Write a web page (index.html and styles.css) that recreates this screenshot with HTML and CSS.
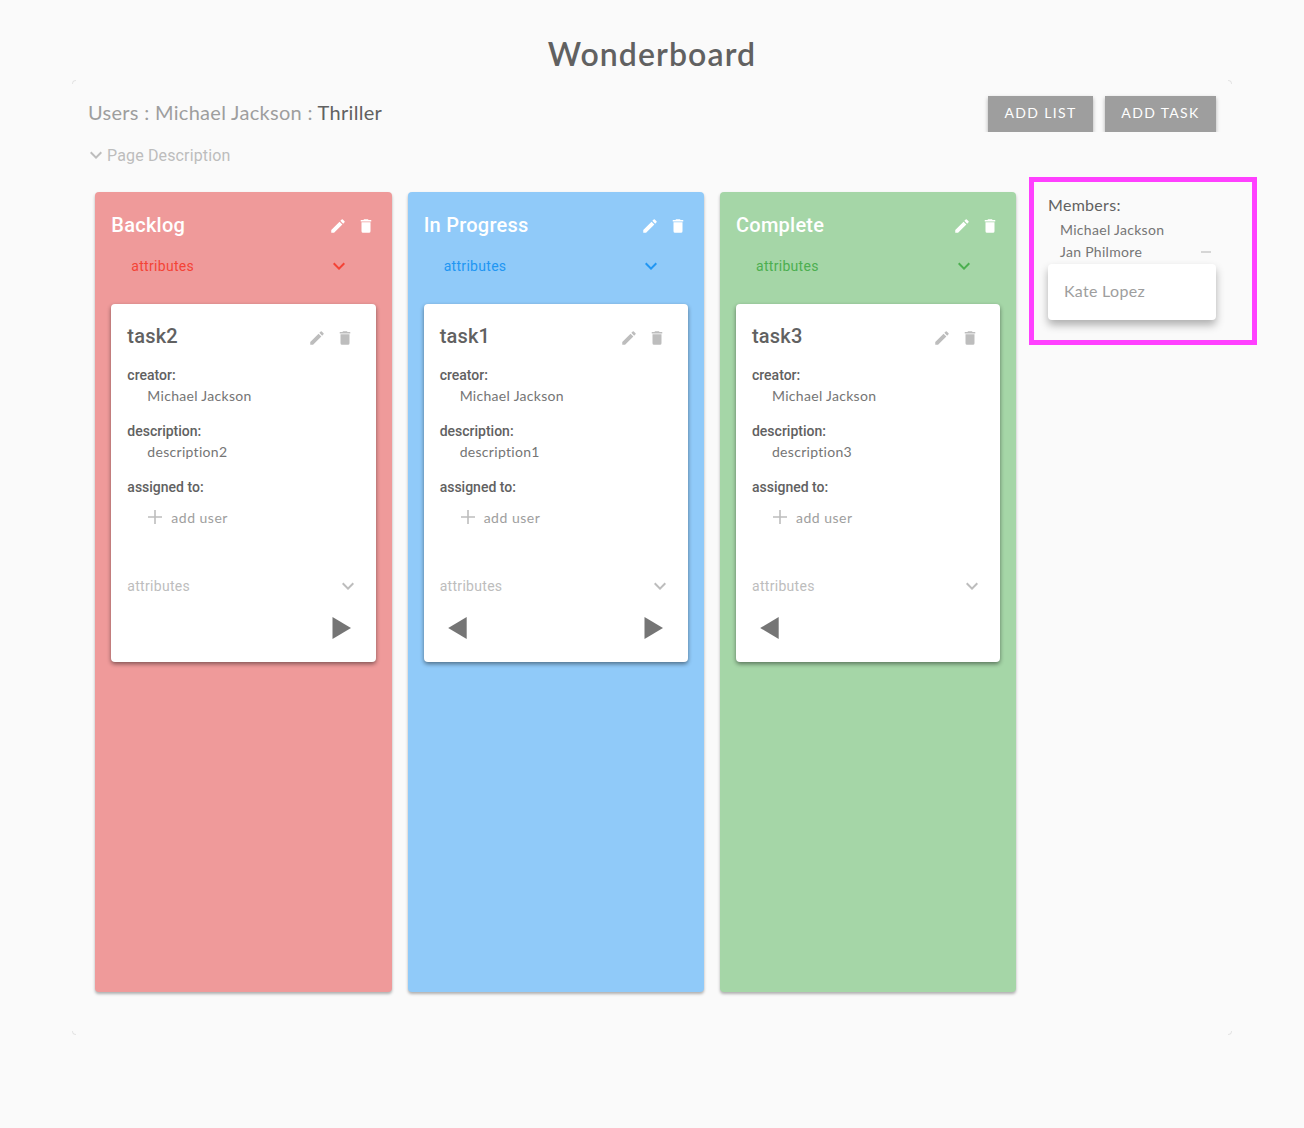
FILE: index.html
```html
<!DOCTYPE html>
<html lang="en">
<head>
<meta charset="utf-8">
<title>Wonderboard</title>
<link rel="stylesheet" href="styles.css">
</head>
<body>
<svg class="defs" width="0" height="0" aria-hidden="true">
  <symbol id="i-edit" viewBox="0 0 24 24"><path d="M3 17.25V21h3.75L17.81 9.94l-3.75-3.75L3 17.25zM20.71 7.04a1 1 0 0 0 0-1.41l-2.34-2.34a1 1 0 0 0-1.41 0l-1.83 1.83 3.75 3.75 1.83-1.83z"/></symbol>
  <symbol id="i-trash" viewBox="0 0 24 24"><path d="M6 19a2 2 0 0 0 2 2h8a2 2 0 0 0 2-2V7H6v12zM19 4h-3.5l-1-1h-5l-1 1H5v2h14V4z"/></symbol>
  <symbol id="i-chev" viewBox="0 0 24 24"><path d="M7.41 8.59 12 13.17l4.59-4.58L18 10l-6 6-6-6z"/></symbol>
  <symbol id="i-plus" viewBox="0 0 24 24"><path d="M19 12.800h-6.200V19h-1.600v-6.200H5v-1.600h6.200V5h1.600v6.200H19z"/></symbol>
  <symbol id="i-next" viewBox="0 0 24 24"><path d="M2.500 1v22L21 12z"/></symbol>
  <symbol id="i-prev" viewBox="0 0 24 24"><path d="M20.700 1v22L2.200 12z"/></symbol>
</svg>

<h1 class="title">Wonderboard</h1>

<main class="panel">
  <span class="mark mark-tl"></span><span class="mark mark-tr"></span><span class="mark mark-bl"></span><span class="mark mark-br"></span>
  <header class="toolbar">
    <div class="crumbs"><span class="crumb-muted">Users : Michael Jackson : </span><span class="crumb-current">Thriller</span></div>
    <div class="actions">
      <button class="btn btn-list">ADD LIST</button>
      <button class="btn btn-task">ADD TASK</button>
    </div>
  </header>
  <div class="page-desc"><svg class="page-chev"><use href="#i-chev"/></svg><span>Page Description</span></div>

  <div class="board">
    <div class="lists">
      <section class="list list-red">
        <div class="list-head"><h2>Backlog</h2><svg class="ic ic-edit"><use href="#i-edit"/></svg><svg class="ic ic-trash"><use href="#i-trash"/></svg></div>
        <div class="list-attrs"><span>attributes</span><svg class="chev"><use href="#i-chev"/></svg></div>
        <article class="task">
          <div class="task-head"><h3>task2</h3><svg class="ic ic-edit"><use href="#i-edit"/></svg><svg class="ic ic-trash"><use href="#i-trash"/></svg></div>
          <div class="label">creator:</div><div class="value">Michael Jackson</div>
          <div class="label label-next">description:</div><div class="value">description2</div>
          <div class="label label-next">assigned to:</div>
          <div class="add-user"><svg class="plus"><use href="#i-plus"/></svg><span>add user</span></div>
          <div class="task-attrs"><span>attributes</span><svg class="chev"><use href="#i-chev"/></svg></div>
          <div class="moves moves-end"><svg class="move"><use href="#i-next"/></svg></div>
        </article>
      </section>

      <section class="list list-blue">
        <div class="list-head"><h2>In Progress</h2><svg class="ic ic-edit"><use href="#i-edit"/></svg><svg class="ic ic-trash"><use href="#i-trash"/></svg></div>
        <div class="list-attrs"><span>attributes</span><svg class="chev"><use href="#i-chev"/></svg></div>
        <article class="task">
          <div class="task-head"><h3>task1</h3><svg class="ic ic-edit"><use href="#i-edit"/></svg><svg class="ic ic-trash"><use href="#i-trash"/></svg></div>
          <div class="label">creator:</div><div class="value">Michael Jackson</div>
          <div class="label label-next">description:</div><div class="value">description1</div>
          <div class="label label-next">assigned to:</div>
          <div class="add-user"><svg class="plus"><use href="#i-plus"/></svg><span>add user</span></div>
          <div class="task-attrs"><span>attributes</span><svg class="chev"><use href="#i-chev"/></svg></div>
          <div class="moves"><svg class="move"><use href="#i-prev"/></svg><svg class="move"><use href="#i-next"/></svg></div>
        </article>
      </section>

      <section class="list list-green">
        <div class="list-head"><h2>Complete</h2><svg class="ic ic-edit"><use href="#i-edit"/></svg><svg class="ic ic-trash"><use href="#i-trash"/></svg></div>
        <div class="list-attrs"><span>attributes</span><svg class="chev"><use href="#i-chev"/></svg></div>
        <article class="task">
          <div class="task-head"><h3>task3</h3><svg class="ic ic-edit"><use href="#i-edit"/></svg><svg class="ic ic-trash"><use href="#i-trash"/></svg></div>
          <div class="label">creator:</div><div class="value">Michael Jackson</div>
          <div class="label label-next">description:</div><div class="value">description3</div>
          <div class="label label-next">assigned to:</div>
          <div class="add-user"><svg class="plus"><use href="#i-plus"/></svg><span>add user</span></div>
          <div class="task-attrs"><span>attributes</span><svg class="chev"><use href="#i-chev"/></svg></div>
          <div class="moves"><svg class="move"><use href="#i-prev"/></svg></div>
        </article>
      </section>
    </div>

    <aside class="members">
      <div class="members-title">Members:</div>
      <div class="member">Michael Jackson</div>
      <div class="member member-row"><span>Jan Philmore</span><i class="minus"></i></div>
      <div class="member-menu">Kate Lopez</div>
    </aside>
  </div>
</main>
</body>
</html>
```

FILE: styles.css
```css
* { box-sizing: border-box; }
html, body { margin: 0; padding: 0; }
body {
  height: 1128px;
  background: #fafafa;
  font-family: "Roboto", sans-serif;
  color: #616161;
  overflow: hidden;
}
.defs { position: absolute; }

.title {
  margin: 0;
  height: 80px;
  padding-top: 33px;
  text-align: center;
  font: 600 32px/41px "Lato", sans-serif;
  letter-spacing: 1.1px;
  color: #616161;
}

.panel {
  position: relative;
  width: 1160px;
  height: 955px;
  margin-left: 72px;
}
.mark { position: absolute; width: 4px; height: 4px; border: 0 solid #e4e4e4; }
.mark-tl { left: 0; top: 0; border-top-width: 1px; border-left-width: 1px; border-top-left-radius: 4px; }
.mark-tr { right: 0; top: 0; border-top-width: 1px; border-right-width: 1px; border-top-right-radius: 4px; }
.mark-bl { left: 0; bottom: 0; border-bottom-width: 1px; border-left-width: 1px; border-bottom-left-radius: 4px; }
.mark-br { right: 0; bottom: 0; border-bottom-width: 1px; border-right-width: 1px; border-bottom-right-radius: 4px; }

.toolbar {
  display: flex;
  justify-content: space-between;
  height: 52px;
  padding: 16px 16px 0;
  overflow: hidden;
}
.crumbs {
  font: 400 20px/32px "Lato", sans-serif;
  letter-spacing: 0.3px;
}
.crumb-muted { color: #9e9e9e; }
.crumb-current { color: #616161; }
.actions { display: flex; gap: 12px; }
.btn {
  height: 36px;
  padding: 0 0 2px;
  border: 0;
  background: #9e9e9e;
  color: #fff;
  font: 400 14px/34px "Lato", sans-serif;
  letter-spacing: 1.35px;
  box-shadow: 0 2px 4px rgba(0,0,0,.3);
}
.btn-list { width: 105px; }
.btn-task { width: 111px; }

.page-desc {
  display: flex;
  align-items: center;
  height: 24px;
  margin-top: 11px;
  padding-left: 12px;
  font-size: 16px;
  letter-spacing: 0.15px;
  color: #bdbdbd;
}
.page-chev { width: 24px; height: 24px; margin-right: -1px; fill: #bdbdbd; }

.board {
  display: flex;
  align-items: flex-start;
  padding-left: 23.33px;
}
.lists {
  flex: none;
  display: flex;
  gap: 16px;
  width: 921px;
  margin-top: 25px;
}
.list {
  flex: 1 1 0;
  height: 800px;
  padding: 16px;
  border-radius: 4px;
  box-shadow: 0 2px 3px rgba(0,0,0,.3);
}
.list-red { background: #ef9a9a; --accent: #f44336; }
.list-blue { background: #90caf9; --accent: #2196f3; }
.list-green { background: #a5d6a7; --accent: #4caf50; }

.list-head {
  display: flex;
  align-items: center;
  height: 34px;
  color: #fff;
  fill: #fff;
}
.list-head h2 {
  flex: 1;
  margin: 0;
  font: 500 20px/32px "Roboto", sans-serif;
  letter-spacing: 0.25px;
}
.ic { width: 18px; height: 18px; flex: none; }
.ic-edit { margin-right: 10px; }
.ic-trash { margin-right: 1px; }
.list-head .ic { margin-top: 2px; }

.list-attrs {
  display: flex;
  align-items: center;
  justify-content: space-between;
  height: 48px;
  padding: 0 24.5px 0 20px;
  font-size: 14px;
  letter-spacing: 0.3px;
  color: var(--accent);
  fill: var(--accent);
}
.chev { width: 24px; height: 24px; flex: none; }

.task {
  height: 358px;
  margin-top: 14px;
  padding: 16px;
  background: #fff;
  border-radius: 4px;
  box-shadow: 0 2px 4px rgba(0,0,0,.45);
}
.task-head {
  display: flex;
  align-items: center;
  height: 32px;
  margin-bottom: 16px;
  fill: #bdbdbd;
}
.task-head h3 {
  flex: 1;
  margin: 0;
  font: 500 20px/32px "Roboto", sans-serif;
  letter-spacing: 0.2px;
  color: #616161;
}
.task-head .ic-trash { margin-right: 5.5px; }
.task-head .ic { margin-top: 4px; }
.task-head .ic-edit { margin-right: 10px; }

.label {
  height: 17px;
  font: 500 14px/15px "Roboto", sans-serif;
  color: #616161;
}
.label-next { margin-top: 20px; }
.value {
  height: 19px;
  padding-left: 20px;
  font: 400 14px/22px "Lato", sans-serif;
  letter-spacing: 0.3px;
  color: #757575;
}
.add-user {
  display: flex;
  align-items: center;
  height: 24px;
  margin-top: 9px;
  padding-left: 16px;
  font: 400 14px/24px "Lato", sans-serif;
  letter-spacing: 0.5px;
  color: #9e9e9e;
}
.plus { width: 24px; height: 24px; margin-right: 4px; margin-top: -2px; fill: #bdbdbd; }

.task-attrs {
  display: flex;
  align-items: center;
  justify-content: space-between;
  height: 48px;
  margin-top: 32px;
  font-size: 14px;
  letter-spacing: 0.3px;
  color: #bdbdbd;
  fill: #bdbdbd;
}
.moves {
  display: flex;
  justify-content: space-between;
  margin-top: 6px;
  padding: 0 6px;
  fill: #757575;
}
.moves-end { justify-content: flex-end; }
.move { width: 24px; height: 24px; }

.members {
  flex: none;
  width: 228px;
  height: 168px;
  margin: 10px 0 0 12.67px;
  padding: 9px 14px 0;
  border: 5px solid #ff40ff;
}
.members-title {
  font: 400 16px/28px "Lato", sans-serif;
  letter-spacing: 0.3px;
  color: #616161;
}
.member {
  height: 22px;
  padding-left: 12px;
  font: 400 14px/22px "Lato", sans-serif;
  letter-spacing: 0.3px;
  color: #757575;
}
.member-row {
  display: flex;
  justify-content: space-between;
  align-items: center;
  padding-right: 5px;
  width: 168px;
}
.minus { width: 10px; height: 2px; background: #d6d6d6; }
.member-menu {
  width: 168px;
  height: 56px;
  margin-top: 1px;
  padding-left: 16px;
  background: #fff;
  border-radius: 4px;
  box-shadow: 0 5px 8px rgba(0,0,0,.3);
  font: 400 16px/54px "Lato", sans-serif;
  letter-spacing: 0.3px;
  color: #9e9e9e;
}
```
